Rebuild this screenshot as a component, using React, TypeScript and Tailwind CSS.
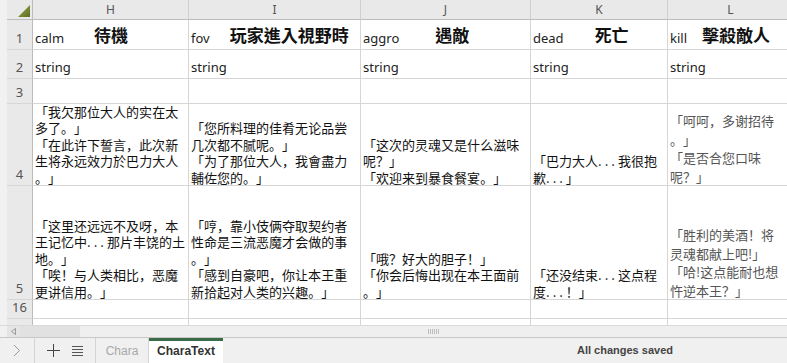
import React from 'react';

const cjk = '"Noto Sans CJK SC", "Noto Sans CJK TC", sans-serif';
const latin = '"Noto Sans", "Open Sans", sans-serif';

const cols = [
  { letter: 'H', key: 'calm', title: '待機', gap: 'ml-[30px]' },
  { letter: 'I', key: 'fov', title: '玩家進入視野時', gap: 'ml-[20px]' },
  { letter: 'J', key: 'aggro', title: '遇敵', gap: 'ml-[36px]' },
  { letter: 'K', key: 'dead', title: '死亡', gap: 'ml-[31px]' },
  { letter: 'L', key: 'kill', title: '擊殺敵人', gap: 'ml-[15px]' },
];

const row4 = [
  ['根然我族無言喻。」', '「我欠那位大人的实在太', '多了。」', '「在此许下誓言，此次新', '生将永远效力於巴力大人', '。」'],
  ['「您所料理的佳肴无论品尝', '几次都不腻呢。」', '「为了那位大人，我會盡力', '輔佐您的。」'],
  ['「这次的灵魂又是什么滋味', '呢？」', '「欢迎来到暴食餐宴。」'],
  ['「巴力大人...我很抱', '歉...」'],
  ['「呵呵，多谢招待', '。」', '「是否合您口味', '呢？」'],
];

const row5 = [
  ['「这里还远远不及呀，本', '王记忆中...那片丰饶的土', '地。」', '「唉！与人类相比，恶魔', '更讲信用。」'],
  ['「哼，靠小伎俩夺取契约者', '性命是三流恶魔才会做的事', '。」', '「感到自豪吧，你让本王重', '新拾起对人类的兴趣。」'],
  ['「哦？好大的胆子！」', '「你会后悔出现在本王面前', '。」'],
  ['「还没结束...这点程', '度...！」'],
  ['「胜利的美酒！将', '灵魂都献上吧!」', '「哈!这点能耐也想', '忤逆本王？」'],
];

// the sheet font sets brackets and stops full width; pin each one to a 1em box
function Punct({ ch }: { ch: string }) {
  if (ch === '「') return <span className="inline-block w-[1em] text-right">{ch}</span>;
  if (ch === '？' || ch === '！') return <span className="inline-block w-[1em] text-center">{ch}</span>;
  return <span className="inline-block w-[1em] text-left">{ch}</span>;
}

function Line({ text }: { text: string }) {
  const parts = text.split('...');
  return (
    <div className="whitespace-nowrap">
      {parts.map((p, i) => (
        <React.Fragment key={i}>
          {Array.from(p).map((ch, j) =>
            '「」。，？！'.includes(ch) ? <Punct key={j} ch={ch} /> : <React.Fragment key={j}>{ch}</React.Fragment>
          )}
          {i < parts.length - 1 && <span className="tracking-[3px]">...</span>}
        </React.Fragment>
      ))}
    </div>
  );
}

function RowHead({ n }: { n: string }) {
  return (
    <div className="flex items-end justify-center border-b border-r border-b-[#d6d6d6] border-r-[#bcbcbc] bg-[#e9e9e9] pb-[1px] text-[13px] text-[#555]" style={{ fontFamily: latin }}>
      {n}
    </div>
  );
}

function TextCell({ lines, last }: { lines: string[]; last?: boolean }) {
  return (
    <div
      className={`flex flex-col justify-end overflow-hidden border-b border-r border-[#d6d6d6] pl-[2px] text-[13px] ${last ? 'leading-[18.5px] text-[#555]' : 'leading-[16.5px] text-[#111]'}`}
      style={{ fontFamily: cjk }}
    >
      <div className="-mb-[1px]">
        {lines.map((l, i) => (
          <Line key={i} text={l} />
        ))}
      </div>
    </div>
  );
}

function Blank() {
  return <div className="border-b border-r border-[#d6d6d6]" />;
}

export default function App() {
  return (
    <div className="h-[363px] w-[787px] overflow-hidden bg-white">
      <div className="flex h-[325px]">
        <div className="w-[7px] bg-[#f1f1f1]" />
        <div className="grid flex-1 grid-cols-[26px_156px_172px_170px_137px_126px] grid-rows-[20px_30px_29px_25px_82px_114px_19px_6px] overflow-hidden">
          {/* header row */}
          <div className="relative border-b border-r border-b-[#bcbcbc] border-r-[#bcbcbc] bg-[#e9e9e9]">
            <svg className="absolute bottom-[2px] right-[2px]" width="12" height="12" viewBox="0 0 12 12">
              <defs>
                <linearGradient id="tri" x1="0" y1="0" x2="1" y2="1">
                  <stop offset="0" stopColor="#9aa84a" />
                  <stop offset="1" stopColor="#5d6e22" />
                </linearGradient>
              </defs>
              <polygon points="12,0 12,12 0,12" fill="url(#tri)" />
            </svg>
          </div>
          {cols.map((c) => (
            <div key={c.letter} className="flex items-center justify-center border-b border-r border-b-[#bcbcbc] border-r-[#d0d0d0] bg-[#e9e9e9] pt-[1px] text-[12px] text-[#555]" style={{ fontFamily: latin }}>
              {c.letter}
            </div>
          ))}

          {/* row 1 */}
          <RowHead n="1" />
          {cols.map((c) => (
            <div key={c.key} className="flex items-end overflow-hidden whitespace-nowrap border-b border-r border-[#d6d6d6] pb-[2px] pl-[2px]">
              <span className="text-[13px] leading-[18px] text-[#222]" style={{ fontFamily: latin }}>{c.key}</span>
              <span className={`${c.gap} text-[17px] font-bold leading-[24px] text-[#111]`} style={{ fontFamily: '"Noto Sans CJK TC", sans-serif' }}>{c.title}</span>
            </div>
          ))}

          {/* row 2 */}
          <RowHead n="2" />
          {cols.map((c) => (
            <div key={c.key} className="flex items-end border-b border-r border-[#d6d6d6] pb-[2px] pl-[2px] text-[13px] leading-[18px] text-[#222]" style={{ fontFamily: latin }}>
              string
            </div>
          ))}

          {/* row 3 */}
          <RowHead n="3" />
          {cols.map((c) => <Blank key={c.key} />)}

          {/* row 4 */}
          <RowHead n="4" />
          {row4.map((lines, i) => <TextCell key={i} lines={lines} last={i === 4} />)}

          {/* row 5 */}
          <RowHead n="5" />
          {row5.map((lines, i) => <TextCell key={i} lines={lines} last={i === 4} />)}

          {/* row 16 */}
          <RowHead n="16" />
          {cols.map((c) => <Blank key={c.key} />)}

          <div className="border-r border-[#bcbcbc] bg-[#e9e9e9]" />
          {cols.map((c) => <div key={c.key} className="border-r border-[#d6d6d6]" />)}
        </div>
      </div>

      {/* horizontal scrollbar */}
      <div className="flex h-[13px] border-b border-t border-b-[#c8c8c8] border-t-[#dadada] bg-[#efefef]">
        <div className="w-[7px] bg-[#f1f1f1]" />
        <div className="flex w-[13px] items-center justify-center bg-[#e4e4e4]">
          <svg width="5" height="7" viewBox="0 0 5 7"><polygon points="4.5,0.5 4.5,6.5 0.5,3.5" fill="none" stroke="#999" strokeWidth="1" /></svg>
        </div>
        <div className="w-[60px] bg-[#e1e1e1]" />
        <div className="flex flex-1 items-center justify-center bg-[#efefef]">
          <div className="flex gap-[1px]">
            {[0, 1, 2, 3, 4, 5].map((i) => (
              <div key={i} className="h-[5px] w-[1px] bg-[#bdbdbd]" />
            ))}
          </div>
        </div>
      </div>

      {/* sheet tabs */}
      <div className="flex h-[25px] items-stretch bg-[#f0f0f0]" style={{ fontFamily: '"Liberation Sans", Arial, sans-serif' }}>
        <div className="flex w-[35px] items-center justify-center border-r border-[#d4d4d4]">
          <svg width="8" height="13" viewBox="0 0 8 13"><path d="M1 1l5.5 5.5L1 12" fill="none" stroke="#9a9a9a" strokeWidth="1" /></svg>
        </div>
        <div className="flex w-[61px] items-center justify-center gap-[12px] border-r border-[#d4d4d4]">
          <svg width="13" height="13" viewBox="0 0 13 13"><path d="M6.5 0v13M0 6.5h13" stroke="#444" strokeWidth="1" /></svg>
          <svg width="11" height="11" viewBox="0 0 11 11"><path d="M0 1.5h11M0 4.5h11M0 7.5h11M0 10.5h11" stroke="#555" strokeWidth="1" /></svg>
        </div>
        <div className="flex w-[53px] items-center justify-center border-r border-[#d4d4d4] text-[12px] text-[#a8a8a8]">Chara</div>
        <div className="flex w-[74px] items-center justify-center border-t-[3px] border-[#3b6c4a] bg-white pb-[2px] text-[12px] font-semibold text-[#333]">CharaText</div>
        <div className="flex-1" />
        <div className="flex items-center pr-[114px] text-[11px] font-bold text-[#444]">All changes saved</div>
      </div>
    </div>
  );
}
